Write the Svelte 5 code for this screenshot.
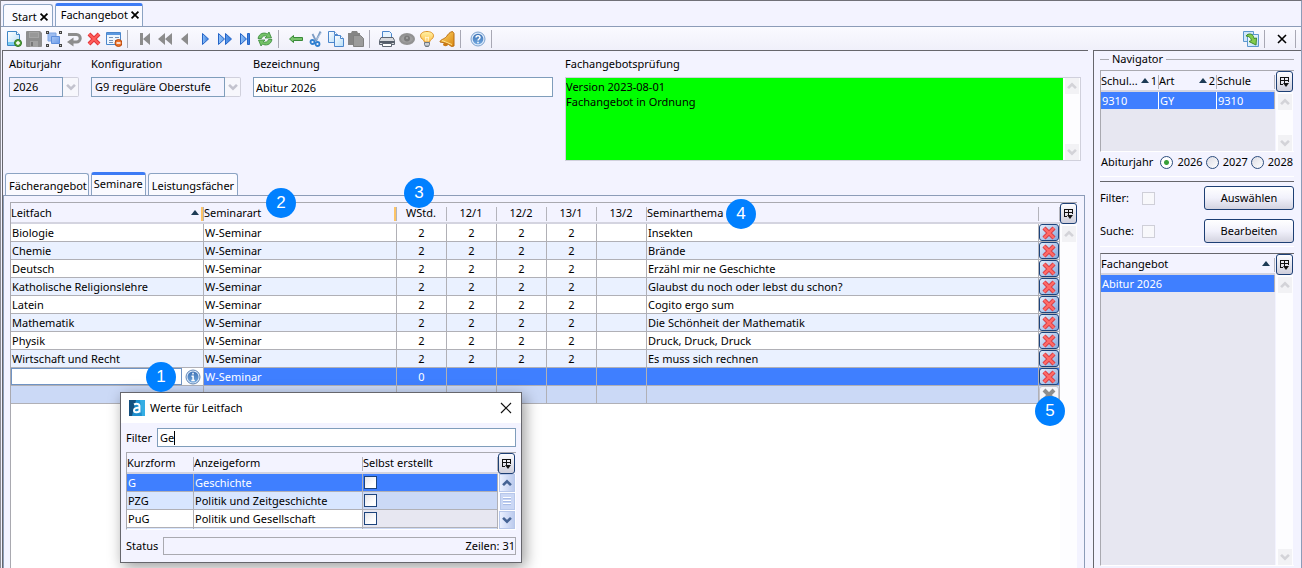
<script>
  const rows = [
    ['Biologie', 'Insekten'],
    ['Chemie', 'Brände'],
    ['Deutsch', 'Erzähl mir ne Geschichte'],
    ['Katholische Religionslehre', 'Glaubst du noch oder lebst du schon?'],
    ['Latein', 'Cogito ergo sum'],
    ['Mathematik', 'Die Schönheit der Mathematik'],
    ['Physik', 'Druck, Druck, Druck'],
    ['Wirtschaft und Recht', 'Es muss sich rechnen']
  ];
  const values = [
    ['G', 'Geschichte'],
    ['PZG', 'Politik und Zeitgeschichte'],
    ['PuG', 'Politik und Gesellschaft']
  ];
  const halves = ['12/1', '12/2', '13/1', '13/2'];
  const years = ['2026', '2027', '2028'];
  let year = $state('2026');
  let filter = $state('Ge');
  let title = $state('Abitur 2026');
  let subject = $state('');

  const groups = [
    [['new', 'Neu'], ['save', 'Speichern'], ['group', 'Gruppieren'], ['undo', 'Rückgängig'], ['delete', 'Löschen'], ['form', 'Formular']],
    [['first', 'Erster'], ['rewind', 'Zurückspulen'], ['prev', 'Voriger'], ['next', 'Nächster'], ['forward', 'Vorspulen'], ['last', 'Letzter'], ['refresh', 'Aktualisieren']],
    [['back', 'Zurück'], ['cut', 'Ausschneiden'], ['copy', 'Kopieren'], ['paste', 'Einfügen']],
    [['print', 'Drucken'], ['eye', 'Ansicht'], ['bulb', 'Hinweis'], ['bell', 'Meldungen']],
    [['help', 'Hilfe']]
  ];

  const page = (x, y, w, h) =>
    `<path d="M${x} ${y}h${w - 3}l3 3v${h - 3}h-${w}z" fill="url(#paper)" stroke="#4b86cc"/><path d="M${x + w - 3} ${y}v3h3" fill="#fff" stroke="#4b86cc"/>`;

  const icons = {
    new: `<path d="M1.500 .5h9l3 3v11h-12z" fill="url(#paper)" stroke="#3f86c6"/><path d="M10.500 .5v3h3" fill="#fff" stroke="#3f86c6"/><path d="M2 11h11v3h-11z" fill="#7ccbf0"/><circle cx="12" cy="12" r="3.500" fill="#5aa83a" stroke="#2f7426"/><path d="M12 10v4M10 12h4" stroke="#fff" stroke-width="1.400"/>`,
    save: `<path d="M1 0h13l2 2v13a1 1 0 0 1-1 1H1a1 1 0 0 1-1-1V1a1 1 0 0 1 1-1z" fill="#8e8e8e"/><path d="M3 1h10v6H3z" fill="#a5a5a5"/><path d="M4 3h8M4 5h8" stroke="#8b8b8b"/><path d="M4 10h8v6H4z" fill="#a2a2a2"/><path d="M5 11h2v4H5z" fill="#777"/>`,
    group: `<path d="M2 2h8v8H2z" fill="#9dbcf0" stroke="#7ea5e4"/><path d="M5.500 5.500h8v7h-8z" fill="url(#blue)" stroke="#5f8fdc"/><path d="M0 0h3v3H0zM13 0h3v3h-3zM0 13h3v3H0zM13 13h3v3h-3z" fill="#444"/><path d="M1 1h1v1H1zM14 1h1v1h-1zM1 14h1v1H1zM14 14h1v1h-1z" fill="#ccc"/>`,
    undo: `<path d="M2 3.500h8.500a3.700 3.700 0 0 1 0 7.500H6" fill="none" stroke="#8d8d8d" stroke-width="3"/><path d="M7.500 6.500v9L1 11z" fill="#8d8d8d"/>`,
    delete: `<path d="M3 3l10 10M13 3L3 13" stroke="#e2343a" stroke-width="4"/><path d="M3 3l10 10M13 3L3 13" stroke="#ff5d5a" stroke-width="2"/>`,
    form: `<path d="M.5 1.500h14v12H.5z" fill="#eef6ff" stroke="#4b86cc"/><path d="M1 2h13v2H1z" fill="#5b98e0"/><path d="M3 6.500h4M3 9.500h4M9 6.500h4M9 9.500h2M3 11.500h4" stroke="#7792b5"/><circle cx="12.500" cy="12" r="3.500" fill="#ee7128" stroke="#b64a10"/><path d="M10.500 12h4" stroke="#fff" stroke-width="1.500"/>`,
    first: `<path d="M3 2h3v12H3zM13 2v12L6 8z" fill="#8c8c8c"/>`,
    rewind: `<path d="M8 2v12L1 8zM15 2v12L8 8z" fill="#8c8c8c"/>`,
    prev: `<path d="M11 2v12L4 8z" fill="#8c8c8c"/>`,
    next: `<path d="M5.500 2.500v11l6-5.500z" fill="url(#play)" stroke="#2464c8"/>`,
    forward: `<path d="M1.500 2.500v11l6-5.500zM8.500 2.500v11l6-5.500z" fill="url(#play)" stroke="#2464c8"/>`,
    last: `<path d="M3.500 2.500v11l6-5.500zM10.500 2.500h2v11h-2z" fill="url(#play)" stroke="#2464c8"/>`,
    refresh: `<path d="M1 7.500c1-5.500 6.500-6.500 9.500-4.500L12 1l2.500 6H8l1.800-1.800C8 4.300 5 5 4.500 7.500z" fill="#74c268" stroke="#37883a" stroke-width=".8"/><path d="M15 8.500c-1 5.500-6.500 6.500-9.500 4.500L4 15 1.500 9H8l-1.800 1.800C8 11.700 11 11 11.500 8.500z" fill="#74c268" stroke="#37883a" stroke-width=".8"/>`,
    back: `<path d="M1.500 8l4-3.500v2h9v3h-9v2z" fill="#79c36b" stroke="#398b38"/>`,
    cut: `<path d="M8 10L12.500 .5M8 10L4.500 3" stroke="#7d9cc4" stroke-width="1.800" fill="none"/><path d="M8.500 8.500l5-7" stroke="#b5c9e2"/><circle cx="4.500" cy="11" r="2" fill="none" stroke="#2f7fd0" stroke-width="1.800"/><circle cx="9.500" cy="13" r="2" fill="none" stroke="#2f7fd0" stroke-width="1.800"/>`,
    copy: page(0.5, 0.5, 9, 11) + page(6.5, 4.5, 9, 11),
    paste: `<path d="M0 2h3l1-2h5l1 2h2v12H0z" fill="#858585"/><path d="M5.500 4.500h7l3 3v8h-10z" fill="#9b9b9b" stroke="#7f7f7f"/>`,
    print: `<path d="M3.500 7V.5h7l2 2V7" fill="#e6f4ff" stroke="#4b86cc"/><path d="M2 6.500h12l1.500 3v4h-15v-4z" fill="#d7d9dd" stroke="#5e6672"/><path d="M1 10h14v2H1z" fill="#555d69"/><path d="M3.500 12.500h9v3h-9z" fill="#fff" stroke="#5e6672"/>`,
    eye: `<ellipse cx="8" cy="8" rx="8" ry="6" fill="#929292"/><ellipse cx="8" cy="8" rx="6" ry="3.500" fill="#9f9f9f"/><circle cx="8" cy="7.500" r="3" fill="#7c7c7c"/><circle cx="8" cy="7" r="1" fill="#aaa"/>`,
    bulb: `<path d="M5.500 11C5 8.500 1.500 8 1.500 4.800 1.500 2 4.500 .5 8 .5s6.500 1.500 6.500 4.300C14.500 8 11 8.500 10.500 11z" fill="url(#amber)" stroke="#dd9328"/><path d="M7 10.500L6.500 6l1.500 1 1.500-1-.5 4.500" fill="none" stroke="#fff8d8"/><path d="M5.500 11.500h5v2l-1 2h-3l-1-2z" fill="#a9b0b8" stroke="#6f7882"/><path d="M6 13h4" stroke="#eee"/>`,
    bell: `<path d="M13.500 .5l1.500 2v12.500l-2.500.5C9 12.500 5 11.500 1 11c0-2.500 4-2.500 6.500-5.500C9 3.500 10.500 1 13.500 .5z" fill="url(#gold)" stroke="#b86c10"/><path d="M3 9.500l10 4" stroke="#ffe08a"/><ellipse cx="6.500" cy="13.500" rx="2.500" ry="1.800" fill="#c97914"/>`,
    help: `<circle cx="8" cy="8" r="7" fill="#dbe9fa" stroke="#7fa3cf"/><circle cx="8" cy="8" r="5.300" fill="url(#orb)"/><path d="M6 6.500c0-2.400 4-2.400 4 0 0 1.500-2 1.500-2 3M8 10.700v1.500" fill="none" stroke="#fff" stroke-width="1.500"/>`,
    info: `<circle cx="8" cy="8" r="7" fill="#dbe9fa" stroke="#5f86b8"/><circle cx="8" cy="8" r="5.500" fill="url(#orb)"/><path d="M8 3.800v1.700M6.500 7.200h1.600v4M6.300 11.500h3.500" fill="none" stroke="#fff" stroke-width="1.500"/>`,
    export: `<path d="M.5 .5h10v10H.5z" fill="#cfe6fb" stroke="#5c97cf"/><path d="M4.500 3.500h11v12h-11z" fill="url(#paper)" stroke="#5c97cf"/><path d="M3 5C5 2 10.500 2 11 7.500l2.500-.5-.5 7-7-3.500 2.500-1C8 7 6 5 3 5z" fill="#83cc4e" stroke="#3f8d2a"/>`,
    close: `<path d="M4 4l8 8M12 4l-8 8" stroke="#000" stroke-width="1.600"/>`,
    tabClose: `<path d="M2.500 2.500l11 11M13.500 2.500l-11 11" stroke="#000" stroke-width="2.800"/>`,
    cross: `<path d="M3 3l10 10M13 3L3 13" stroke="#d93f48" stroke-width="4.400"/><path d="M3 3l10 10M13 3L3 13" stroke="#ff6b66" stroke-width="2.400"/>`,
    crossOff: `<path d="M3 3l10 10M13 3L3 13" stroke="#8e8e8e" stroke-width="4"/>`,
    logo: `<path d="M0 0h16v16H0z" fill="#1f8fce"/><path d="M0 0h7L3 16H0z" fill="#14507f"/><path d="M11 0h5v16h-3z" fill="#35aee4"/><path d="M5 4.500c2-1 5.500-1 5.500 1.500v6.500M10.500 8C8 7.500 5 8 5 10.300c0 2.700 4 2.500 5.500.5" fill="none" stroke="#fff" stroke-width="2"/>`
  };
</script>

{#snippet icon(name)}
  <svg class="icon" viewBox="0 0 16 16" aria-hidden="true">{@html icons[name]}</svg>
{/snippet}

{#snippet arrow(down = false)}
  <svg class="chev" viewBox="0 0 16 16" aria-hidden="true">
    <path d={down ? 'M3.500 5.500L8 10l4.500-4.500' : 'M3.500 10.500L8 6l4.500 4.500'} fill="none" stroke="currentColor" stroke-width="3" />
  </svg>
{/snippet}

{#snippet rail(down = true, live = false)}
  <div class="rail" class:live>
    <button class="colbtn" aria-label="Spalten">
      <svg viewBox="0 0 9 10" aria-hidden="true"><path d="M0 0h9v5H8V4H5v2h4L6 10 3 6h1V4H1v3h2v1H0zM1 1v2h3V1zM5 1v2h3V1z" fill="#111" /></svg>
    </button>
    <div class="track">
      <span class="step">{@render arrow()}</span>
      {#if live}<span class="thumb"></span>{/if}
      {#if down}<span class="step">{@render arrow(true)}</span>{/if}
    </div>
  </div>
{/snippet}

{#snippet sort(n = '')}
  <span class="sort"><svg viewBox="0 0 8 5" aria-hidden="true"><path d="M0 5L4 0l4 5z" fill="#1d3b55" /></svg>{n}</span>
{/snippet}

<svg class="defs" aria-hidden="true">
  <defs>
    <linearGradient id="paper" x2="1" y2="1"><stop stop-color="#fff" /><stop offset="1" stop-color="#b5dcf8" /></linearGradient>
    <linearGradient id="blue" x2="1" y2="1"><stop stop-color="#a9c6f5" /><stop offset="1" stop-color="#6b9be8" /></linearGradient>
    <linearGradient id="play" x2="1" y2="0"><stop stop-color="#8fc0f8" /><stop offset="1" stop-color="#3279dc" /></linearGradient>
    <linearGradient id="amber" x2="0" y2="1"><stop stop-color="#fff3a8" /><stop offset="1" stop-color="#ffc04a" /></linearGradient>
    <linearGradient id="gold" x2="1" y2="1"><stop stop-color="#ffd968" /><stop offset="1" stop-color="#d98613" /></linearGradient>
    <linearGradient id="orb" x2="0" y2="1"><stop stop-color="#3f72b4" /><stop offset="1" stop-color="#6fa6de" /></linearGradient>
  </defs>
</svg>

<div class="app">
  <nav class="tabs top">
    <div class="tab"><span>Start</span><button class="tabx" aria-label="Start schließen">{@render icon('tabClose')}</button></div>
    <div class="tab active"><span>Fachangebot</span><button class="tabx" aria-label="Fachangebot schließen">{@render icon('tabClose')}</button></div>
  </nav>

  <div class="toolbar">
    {#each groups as group}
      {#each group as [name, label]}
        <button class="tool" aria-label={label}>{@render icon(name)}</button>
      {/each}
      <span class="sep"></span>
    {/each}
    <span class="grow"></span>
    <button class="tool" aria-label="Exportieren">{@render icon('export')}</button>
    <span class="sep"></span>
    <button class="tool" aria-label="Schließen">{@render icon('close')}</button>
    <span class="sep end"></span>
  </div>

  <div class="content">
    <main>
      <div class="form">
        <div class="field year">
          <label for="year">Abiturjahr</label>
          <div class="combo"><select id="year" disabled><option>2026</option></select><span class="drop">{@render arrow(true)}</span></div>
        </div>
        <div class="field config">
          <label for="config">Konfiguration</label>
          <div class="combo"><select id="config" disabled><option>G9 reguläre Oberstufe</option></select><span class="drop">{@render arrow(true)}</span></div>
        </div>
        <div class="field name">
          <label for="name">Bezeichnung</label>
          <input id="name" type="text" bind:value={title} />
        </div>
        <div class="field check">
          <label for="check">Fachangebotsprüfung</label>
          <div class="memo">
            <textarea id="check" readonly value={'Version 2023-08-01\nFachangebot in Ordnung'}></textarea>
            <div class="track"><span class="step">{@render arrow()}</span><span class="step">{@render arrow(true)}</span></div>
          </div>
        </div>
      </div>

      <nav class="tabs sub">
        <button class="tab">Fächerangebot</button>
        <button class="tab active">Seminare</button>
        <button class="tab">Leistungsfächer</button>
      </nav>

      <section class="panel">
        <div class="grid seminars">
          <div class="body">
            <table>
              <colgroup><col class="wide" /><col class="wide" /><col class="num" span="5" /><col /><col class="act" /></colgroup>
              <thead>
                <tr>
                  <th class="mark"><div class="head">Leitfach{@render sort()}</div></th>
                  <th class="mark">Seminarart</th>
                  <th class="c">WStd.</th>
                  {#each halves as h}<th class="c">{h}</th>{/each}
                  <th>Seminarthema</th>
                  <th></th>
                </tr>
              </thead>
              <tbody>
                {#each rows as [name, topic]}
                  <tr>
                    <td>{name}</td>
                    <td>W-Seminar</td>
                    <td class="c">2</td><td class="c">2</td><td class="c">2</td><td class="c">2</td><td></td>
                    <td>{topic}</td>
                    <td class="cellbtn"><button class="del" aria-label="{name} löschen">{@render icon('cross')}</button></td>
                  </tr>
                {/each}
                <tr class="selected">
                  <td class="edit">
                    <div><input type="text" aria-label="Leitfach" bind:value={subject} /><button class="info" aria-label="Werte anzeigen">{@render icon('info')}</button></div>
                  </td>
                  <td>W-Seminar</td>
                  <td class="c">0</td><td></td><td></td><td></td><td></td><td></td>
                  <td class="cellbtn"><button class="del" aria-label="Zeile löschen">{@render icon('cross')}</button></td>
                </tr>
                <tr class="blank">
                  <td></td><td></td><td></td><td></td><td></td><td></td><td></td><td></td>
                  <td class="cellbtn"><button class="del off" disabled aria-label="Zeile löschen">{@render icon('crossOff')}</button></td>
                </tr>
              </tbody>
            </table>
          </div>
          {@render rail(false)}
        </div>
      </section>
    </main>

    <aside>
      <h2>Navigator</h2>
      <div class="grid schools">
        <div class="body">
          <table>
            <thead>
              <tr>
                <th><div class="head">Schul...{@render sort('1')}</div></th>
                <th><div class="head">Art{@render sort('2')}</div></th>
                <th>Schule</th>
              </tr>
            </thead>
            <tbody><tr class="selected"><td>9310</td><td>GY</td><td>9310</td></tr></tbody>
          </table>
        </div>
        {@render rail()}
      </div>
      <div class="radios" role="radiogroup" aria-label="Abiturjahr">
        <span>Abiturjahr</span>
        {#each years as y}
          <label><input type="radio" name="navyear" value={y} bind:group={year} />{y}</label>
        {/each}
      </div>
      <div class="actions">
        <label for="f1">Filter:</label><input id="f1" type="checkbox" disabled /><button class="push">Auswählen</button>
        <label for="f2">Suche:</label><input id="f2" type="checkbox" disabled /><button class="push">Bearbeiten</button>
      </div>
      <div class="grid offers">
        <div class="body">
          <table>
            <thead><tr><th><div class="head">Fachangebot{@render sort()}</div></th></tr></thead>
            <tbody><tr class="selected"><td>Abitur 2026</td></tr></tbody>
          </table>
        </div>
        {@render rail()}
      </div>
    </aside>
  </div>

  <div class="dialog" role="dialog" aria-labelledby="dlg">
    <header>
      {@render icon('logo')}<span id="dlg">Werte für Leitfach</span>
      <button aria-label="Schließen"><svg viewBox="0 0 12 12" aria-hidden="true"><path d="M1 1l10 10M11 1L1 11" stroke="#111" stroke-width="1.200" /></svg></button>
    </header>
    <div class="dbody">
      <div class="line">
        <label for="flt">Filter</label>
        <div class="entry"><input id="flt" type="text" bind:value={filter} /><span class="caret"></span></div>
      </div>
      <div class="grid values">
        <div class="body">
          <table>
            <colgroup><col class="short" /><col class="long" /><col /></colgroup>
            <thead><tr><th>Kurzform</th><th>Anzeigeform</th><th>Selbst erstellt</th></tr></thead>
            <tbody>
              {#each values as [k, v], i}
                <tr class:selected={i === 0}>
                  <td>{k}</td><td>{v}</td>
                  <td class="own"><input type="checkbox" aria-label="{v} selbst erstellt" /></td>
                </tr>
              {/each}
              <tr><td></td><td></td><td class="own"></td></tr>
            </tbody>
          </table>
        </div>
        {@render rail(true, true)}
      </div>
      <div class="line status"><span>Status</span><output>Zeilen: 31</output></div>
    </div>
  </div>

  <span class="badge b1">1</span>
  <span class="badge b2">2</span>
  <span class="badge b3">3</span>
  <span class="badge b4">4</span>
  <span class="badge b5">5</span>
</div>

<style>
  :global(body) { background: #f3f3ff; }
  :global(*) { box-sizing: border-box; }
  .defs { position: absolute; width: 0; height: 0; }
  .app {
    position: relative; display: flex; flex-direction: column; height: 100vh; overflow: hidden;
    border-top: 1px solid #707078; border-right: 1px solid #8c9cb8; border-left: 1px solid #8a8a92;
    background: #f3f3ff; color: #000; font: 11px/16px "Noto Sans", "Segoe UI", sans-serif;
  }
  button, input, select, textarea { font: inherit; color: inherit; margin: 0; padding: 0; border-radius: 0; outline: none; }
  button { border: 0; background: none; display: grid; place-items: center; }
  .icon { display: block; width: 16px; height: 16px; flex: none; }
  .chev { display: block; width: 14px; height: 14px; }

  .tabs { display: flex; gap: 2px; align-items: flex-end; }
  .tab {
    display: flex; align-items: center; height: 22px; padding: 2px 3px 0;
    border: 1px solid #8ba3c3; border-bottom: 0; border-radius: 3px 3px 0 0; background: #fafaff; white-space: nowrap;
  }
  .tab.active { border-top: 3px solid #3d7bf5; height: 23px; padding: 0 2px 2px; }
  .sub .tab:first-child { padding-right: 1px; }
  .top { height: 25px; padding: 0 2px; }
  .top .tab { padding-left: 8px; gap: 2px; }
  .top .tab.active { padding-left: 5px; }
  .tabx { width: 10px; height: 16px; }
  .tabx .icon { width: 10px; height: 10px; }
  .toolbar { display: flex; align-items: center; height: 24px; padding-left: 3px; border-top: 1px solid #8c9cb8; background: linear-gradient(#fafaff, #f0f0fa); }
  .tool { width: 20px; height: 20px; }
  .sep { width: 1px; height: 18px; margin: 0 7px 0 3px; background: #a8a8b4; }
  .sep.end { margin-right: 5px; }
  .grow { flex: 1; }

  .content { flex: 1; min-height: 0; display: flex; gap: 5px; padding-left: 1px; }
  main { flex: 1; min-width: 0; display: flex; flex-direction: column; border-top: 1px solid #66666c; border-left: 1px solid #66666c; }
  .form { display: flex; gap: 12px; height: 121px; padding: 5px 7px 0 6px; }
  .field { display: flex; flex-direction: column; gap: 5px; }
  .year { width: 70px; }
  .config { width: 150px; }
  .name { width: 300px; }
  .check { flex: 1; min-width: 0; }
  .name input, .combo select { height: 20px; border: 1px solid #7f9dbb; padding: 0 2px; }
  .name input { background: #fff; }
  .combo { display: flex; }
  .combo select { appearance: none; flex: 1; min-width: 0; background: #f3f3ff; opacity: 1; padding: 0 3px; }
  .drop { display: grid; place-items: center; width: 16px; border: 1px solid #d0d0dc; border-left: 0; border-radius: 0 2px 2px 0; background: #f7f7fc; color: #c3c3ce; }
  .memo { display: flex; height: 84px; border: 1px solid #d0d0dc; }
  textarea { flex: 1; border: 0; resize: none; background: #0f0; line-height: 15px; padding: 1px 0; overflow: hidden; }
  .track { flex: 1; display: flex; flex-direction: column; align-items: center; justify-content: space-between; background: #fdfdff; }
  .memo .track { flex: none; width: 17px; }
  .step { display: grid; place-items: center; width: 14px; height: 16px; background: #f2f2f5; color: #d3d3d8; }

  .sub { padding-left: 2px; }
  .panel { flex: 1; min-height: 0; display: flex; margin-right: 3px; padding: 6px 7px 0 6px; border: 1px solid #8c9cb8; border-bottom: 0; }

  .grid { display: flex; border-top: 1px solid #a9a9b0; border-left: 1px solid #a9a9b0; }
  .body { flex: 1; min-width: 0; overflow: hidden; }
  table { width: 100%; table-layout: fixed; border-spacing: 0; }
  th {
    height: 21px; padding: 0 2px 0 0; font-weight: 400; text-align: left; white-space: nowrap; overflow: hidden;
    background: linear-gradient(#b4b4bc, #b4b4bc) right 4px / 1px 14px no-repeat #f3f3ff; border-bottom: 2px solid #d4d4e0;
  }
  th.mark { background: linear-gradient(90deg, #fdc467 67%, #b4b4bc 67%) right 4px / 3px 14px no-repeat #f3f3ff; }
  .head { display: flex; justify-content: space-between; align-items: center; padding-right: 3px; }
  .schools .head { padding-right: 0; }
  .sort { display: flex; align-items: center; gap: 2px; }
  .sort svg { width: 8px; height: 5px; }
  td { height: 18px; padding: 0 1px; line-height: 17px; white-space: nowrap; border-right: 1px solid #b0b0b6; border-bottom: 1px solid #b0b0b6; background: #fff; }
  .c { text-align: center; }
  .wide { width: 193px; }
  .num { width: 50px; }
  .act { width: 21px; }
  .seminars { flex: 1; }
  .seminars .body { background: #fff; }
  .seminars tr:nth-child(even) td { background: #eaf1ff; }
  .grid .selected td { background: #3f7fff; color: #fff; }
  .seminars .blank:nth-child(even) td { background: #cbd9f6; }
  td.cellbtn { padding: 0; }
  .del { width: 20px; height: 17px; border: 1px solid #1d447c; border-radius: 3px; background: linear-gradient(135deg, #e4eefc, #86a8dc); }
  .del.off { border-color: #c4c4cc; background: #f6f6fa; }
  .grid .selected td.edit { padding: 0; background: #fff; color: #000; }
  .edit div { display: flex; }
  .edit input { flex: 1; min-width: 0; height: 17px; border: 1px solid #6f93c4; background: #fff; }
  .info { width: 21px; height: 17px; }

  .rail { display: flex; flex-direction: column; width: 18px; background: #f3f3ff; }
  .colbtn { width: 17px; height: 21px; border: 1px solid #1d3f74; border-radius: 3px; background: linear-gradient(#fdfdff, #cfcfdc); }
  .colbtn svg { display: block; width: 9px; height: 10px; }
  .rail .track { padding-top: 2px; }
  .seminars .rail { width: 17px; }
  aside .rail { width: 19px; padding: 0 1px; }

  aside { width: 208px; flex: none; display: flex; flex-direction: column; padding: 0 7px 2px 6px; border-top: 1px solid #66666c; border-left: 1px solid #66666c; }
  h2 { display: flex; align-items: center; gap: 3px; margin: 0 0 3px; font-size: 11px; line-height: 16px; font-weight: 400; }
  h2::before, h2::after { content: ""; height: 1px; background: #a9a9b0; width: 9px; }
  h2::after { flex: 1; }
  .schools { height: 82px; border-bottom: 1px solid #fff; }
  .schools .body, .offers .body { background: #e7e7f1; }
  .schools td, .offers td { border-bottom: 0; height: 17px; }
  .schools td:not(:last-child) { border-right-color: #fff; }
  .radios { display: flex; align-items: center; gap: 3px; height: 25px; padding: 0 1px 4px; border-bottom: 1px solid #fff; }
  .radios span { flex: 1; }
  .radios label { display: flex; align-items: center; gap: 4px; }
  input[type="radio"] { appearance: none; width: 13px; height: 13px; border: 1px solid #2b4c7d; border-radius: 50%; background: linear-gradient(135deg, #dcdce4, #fff); }
  input[type="radio"]:checked { background: radial-gradient(circle, #38a038 0 2px, #fff 3px); }
  .actions { display: grid; grid-template-columns: 42px 1fr 90px; row-gap: 9px; align-items: center; margin-top: 4px; padding: 4px 0 3px; border-top: 1px solid #66666c; border-bottom: 1px solid #fff; }
  input[type="checkbox"] { appearance: none; display: block; width: 13px; height: 13px; border: 1px solid #1d447c; background: linear-gradient(135deg, #e4e4ea, #fff 70%); }
  input[type="checkbox"]:disabled { border-color: #cfcfd8; background: #f8f8fb; }
  .push { height: 24px; border: 1px solid #1d3f74; border-radius: 3px; background: linear-gradient(#fff, #f1f1fb 50%, #d3d3e0); }
  .offers { flex: 1; margin-top: 6px; border-top: 1px solid #66666c; border-bottom: 1px solid #fff; }

  .dialog { position: absolute; left: 119px; top: 391px; width: 402px; border: 1px solid #66666c; background: #f3f3ff; box-shadow: 3px 4px 14px rgba(0, 0, 0, .4); }
  header { display: flex; align-items: center; gap: 5px; height: 30px; padding: 0 8px; background: #fff; }
  header span { flex: 1; }
  header button { width: 14px; height: 14px; }
  header svg:not(.icon) { width: 12px; height: 12px; }
  .dbody { padding: 5px 5px 7px; }
  .line { display: flex; align-items: center; gap: 5px; }
  .entry { flex: 1; display: flex; align-items: center; height: 19px; padding-left: 2px; border: 1px solid #7f9dbb; background: #fff; }
  .entry input { field-sizing: content; height: 17px; border: 0; background: none; }
  .caret { width: 1px; height: 14px; background: #000; }
  .values { height: 78px; margin: 5px 0 7px; border-bottom: 1px solid #fff; }
  .short { width: 67px; }
  .long { width: 169px; }
  .values tr:nth-child(even) td { background: #d8e6ff; }
  .values tr:not(.selected) td.own { background: #e7e7f1; }
  .values tr:nth-child(even):not(.selected) td.own { background: #cbd9f6; }
  .live .track { padding-top: 0; }
  .live .step { width: 16px; height: 18px; border: 1px solid #b7c7ea; background: linear-gradient(90deg, #eaf0ff, #bccbee); color: #456394; }
  .thumb { width: 15px; height: 17px; border: 1px solid #b7c7ea; background: repeating-linear-gradient(#fff 0 1px, #a9bce6 1px 2px, #c6d4f4 2px 3px) center / 8px 9px no-repeat #cad7f5; }
  output { flex: 1; height: 18px; text-align: right; border: 1px solid #a9a9b0; }

  .badge { position: absolute; display: grid; place-items: center; width: 30px; height: 30px; border-radius: 50%; background: #0080ff; color: #fff; font: 17px/30px "Liberation Sans", Arial, sans-serif; }
  .b1 { left: 145px; top: 361px; }
  .b2 { left: 265px; top: 187px; }
  .b3 { left: 403px; top: 177px; }
  .b4 { left: 725px; top: 198px; }
  .b5 { right: 236px; top: 395px; }
</style>
